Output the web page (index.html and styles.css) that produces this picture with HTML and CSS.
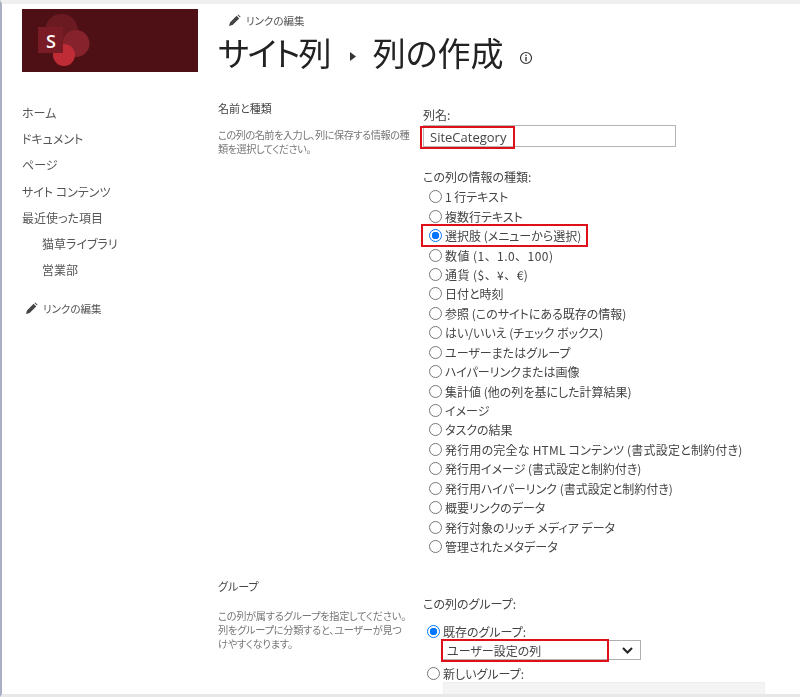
FILE: index.html
```html
<!DOCTYPE html>
<html lang="ja">
<head>
<meta charset="utf-8">
<title>列の作成</title>
<link rel="stylesheet" href="styles.css">
</head>
<body>
<div class="frame">
  <aside class="side">
    <div class="logo">
      <svg class="logo-mark" width="176" height="63" viewBox="0 0 176 63">
        <circle cx="39.500" cy="21.500" r="16.500" fill="#6b1a22"/>
        <circle cx="54" cy="34.500" r="13.500" fill="#85222b"/>
        <circle cx="42" cy="46" r="11" fill="#bf2c36"/>
        <rect x="16" y="18" width="25" height="26" fill="#7a1c26"/>
        <text x="29" y="38.500" class="logo-s" text-anchor="middle">S</text>
      </svg>
    </div>
    <nav class="nav">
      <a class="nav-item">ホーム</a>
      <a class="nav-item">ドキュメント</a>
      <a class="nav-item">ページ</a>
      <a class="nav-item">サイト コンテンツ</a>
      <a class="nav-item">最近使った項目</a>
      <a class="nav-item sub">猫草ライブラリ</a>
      <a class="nav-item sub">営業部</a>
      <a class="edit nav-edit">
        <svg width="13" height="13" viewBox="0 0 13 13"><path d="M1 12l1-3.600 6.600-6.600 2.600 2.600L4.600 11zM9.400 1l.8-.6 2.400 2.400-.6.8z" fill="#444"/></svg>
        リンクの編集</a>
    </nav>
  </aside>
  <main class="main">
    <header class="head">
      <a class="edit head-edit">
        <svg width="13" height="13" viewBox="0 0 13 13"><path d="M1 12l1-3.600 6.600-6.600 2.600 2.600L4.600 11zM9.400 1l.8-.6 2.400 2.400-.6.8z" fill="#444"/></svg>
        リンクの編集</a>
      <h1 class="title">
        <span class="title-site">サイト列</span>
        <svg class="crumb" width="6" height="9" viewBox="0 0 6 9"><path d="M0 0l6 4.500-6 4.500z" fill="#333"/></svg>
        <span>列の作成</span>
        <svg class="info" width="14" height="14" viewBox="0 0 14 14"><circle cx="7" cy="7" r="5.500" fill="none" stroke="#333" stroke-width="1.200"/><rect x="6.300" y="6" width="1.400" height="4.200" fill="#333"/><rect x="6.300" y="3.700" width="1.400" height="1.400" fill="#333"/></svg>
      </h1>
    </header>
    <section class="row name-row">
      <div class="desc">
        <h2 class="desc-title">名前と種類</h2>
        <p class="desc-text tight">この列の名前を入力し、列に保存する情報の種<br>類を選択してください。</p>
      </div>
      <div class="fields">
        <div class="label">列名:</div>
        <div class="name-input">
          <span class="mark mark-name">SiteCategory</span>
        </div>
        <div class="label type-label">この列の情報の種類:</div>
        <ul class="types">
          <li class="type"><span class="radio"></span>1 行テキスト</li>
          <li class="type"><span class="radio"></span>複数行テキスト</li>
          <li class="type"><span class="mark mark-type"><span class="radio on"></span>選択肢 (メニューから選択)</span></li>
          <li class="type wide"><span class="radio"></span>数値 (1、1.0、100)</li>
          <li class="type wide"><span class="radio"></span>通貨 ($、¥、€)</li>
          <li class="type"><span class="radio"></span>日付と時刻</li>
          <li class="type"><span class="radio"></span>参照 (このサイトにある既存の情報)</li>
          <li class="type"><span class="radio"></span>はい/いいえ (チェック ボックス)</li>
          <li class="type"><span class="radio"></span>ユーザーまたはグループ</li>
          <li class="type"><span class="radio"></span>ハイパーリンクまたは画像</li>
          <li class="type"><span class="radio"></span>集計値 (他の列を基にした計算結果)</li>
          <li class="type"><span class="radio"></span>イメージ</li>
          <li class="type"><span class="radio"></span>タスクの結果</li>
          <li class="type airy"><span class="radio"></span>発行用の完全な HTML コンテンツ (書式設定と制約付き)</li>
          <li class="type"><span class="radio"></span>発行用イメージ (書式設定と制約付き)</li>
          <li class="type"><span class="radio"></span>発行用ハイパーリンク (書式設定と制約付き)</li>
          <li class="type"><span class="radio"></span>概要リンクのデータ</li>
          <li class="type"><span class="radio"></span>発行対象のリッチ メディア データ</li>
          <li class="type"><span class="radio"></span>管理されたメタデータ</li>
        </ul>
      </div>
    </section>
    <section class="row group-row">
      <div class="desc">
        <h2 class="desc-title">グループ</h2>
        <p class="desc-text">この列が属するグループを指定してください。<br>列をグループに分類すると、ユーザーが見つ<br>けやすくなります。</p>
      </div>
      <div class="fields">
        <div class="label group-label">この列のグループ:</div>
        <div class="type group-opt group-first"><span class="radio on"></span>既存のグループ:</div>
        <div class="select">
          <span class="mark mark-select">ユーザー設定の列</span>
          <svg class="chev" width="11" height="7" viewBox="0 0 11 7"><path d="M1 1l4.500 4.500L10 1" fill="none" stroke="#222" stroke-width="2"/></svg>
        </div>
        <div class="type group-opt group-new"><span class="radio"></span>新しいグループ:</div>
        <div class="new-group"></div>
      </div>
    </section>
  </main>
</div>
</body>
</html>
```
FILE: styles.css
```css
* { box-sizing: border-box; }
html, body { margin: 0; padding: 0; background: #fff; }
body {
  width: 800px;
  height: 697px;
  overflow: hidden;
  font-family: "Noto Sans CJK JP", "Noto Sans", sans-serif;
  font-feature-settings: "palt";
  color: #444;
}
.frame {
  display: flex;
  height: 697px;
  overflow: hidden;
  border-top: 4px solid #efefef;
  border-left: 2px solid #a9b0c4;
  border-bottom: 3px solid #e8e8e8;
  filter: blur(.35px);
}
.side { width: 215px; flex: none; padding: 5px 0 0 20px; }
.logo { width: 176px; height: 63px; background: #4f1015; }
.logo-mark { display: block; }
.logo-s { font: 600 18px "Open Sans", sans-serif; fill: #fff; }
.nav { display: flex; flex-direction: column; margin-top: 28px; }
.nav-item {
  font-size: 12px;
  line-height: 26.200px;
  height: 26.200px;
  color: #555;
}
.nav-item.sub { padding-left: 20px; }
.edit {
  display: flex;
  align-items: center;
  gap: 5px;
  font-size: 10.500px;
  color: #555;
}
.nav-edit { margin: 15px 0 0 3px; height: 20px; }
.main { flex: 1; }
.head { padding: 9px 0 0 1px; }
.head-edit { margin-left: 10px; }
.title {
  display: flex;
  align-items: center;
  margin: 1px 0 0 0;
  font-size: 33px;
  font-weight: 400;
  line-height: 46px;
  color: #222;
  height: 46px;
}
.title-site { letter-spacing: -1.700px; }
.crumb { margin: 8px 17px 0 20px; }
.info { margin: 12px 0 0 15px; }
.row { display: flex; }
.name-row { margin-top: 24px; }
.desc { width: 206px; flex: none; padding: 1px 0 0 1px; }
.desc-title { margin: 0; font-size: 11px; font-weight: 400; line-height: 16px; color: #444; }
.desc-text { margin: 12px 0 0; font-size: 10.200px; line-height: 14px; color: #777; white-space: nowrap; letter-spacing: -.25px; }
.desc-text.tight { letter-spacing: -.5px; }
.group-row .desc-text { margin-top: 15px; }
.fields { flex: 1; padding-top: 8px; }
.label { font-size: 12px; line-height: 16px; color: #444; }
.name-input {
  width: 253px;
  height: 22px;
  margin-top: 2px;
  border: 1px solid #b5b5b5;
  position: relative;
  color: #444;
}
.mark { border: 2px solid #e0101a; position: absolute; }
.mark-name {
  left: -4px;
  top: 0;
  width: 95px;
  height: 23px;
  padding-left: 8px;
  line-height: 19px;
  font-family: "Open Sans", sans-serif;
  font-size: 13px;
}
.type-label { margin-top: 22px; }
.types { list-style: none; margin: 2px 0 0; padding: 0; }
.type {
  display: flex;
  align-items: center;
  position: relative;
  height: 19.440px;
  padding-left: 6px;
  font-size: 12px;
  color: #444;
  white-space: nowrap;
}
.type.wide { font-feature-settings: normal; letter-spacing: .45px; }
.type.airy { letter-spacing: .2px; }
.radio {
  width: 13px;
  height: 13px;
  flex: none;
  margin-right: 3px;
  border: 1px solid #767676;
  border-radius: 50%;
  background: #fff;
}
.radio.on { border: 1.500px solid #0075ff; background: radial-gradient(circle, #0075ff 0 3.500px, #fff 4px); }
.mark-type {
  display: flex;
  align-items: center;
  left: -2px;
  top: -2px;
  width: 167px;
  height: 23px;
  padding-left: 6px;
}
.group-row { margin-top: 21px; }
.group-label { margin-top: 11px; }
.group-opt { padding-left: 4px; }
.group-first { margin-top: 9px; }
.group-new { margin-top: 4px; }
.select {
  position: relative;
  width: 199px;
  height: 20px;
  margin: -1px 0 0 19px;
  border: 1px solid #b0b0b0;
}
.mark-select {
  left: -2px;
  top: -2px;
  width: 168px;
  height: 23px;
  padding-left: 4px;
  line-height: 19px;
  font-size: 12px;
}
.chev { position: absolute; right: 7px; top: 6px; }
.new-group {
  width: 322px;
  height: 20px;
  margin: -1px 0 0 20px;
  background: #f4f4f4;
  border: 1px solid #eee;
}
```
